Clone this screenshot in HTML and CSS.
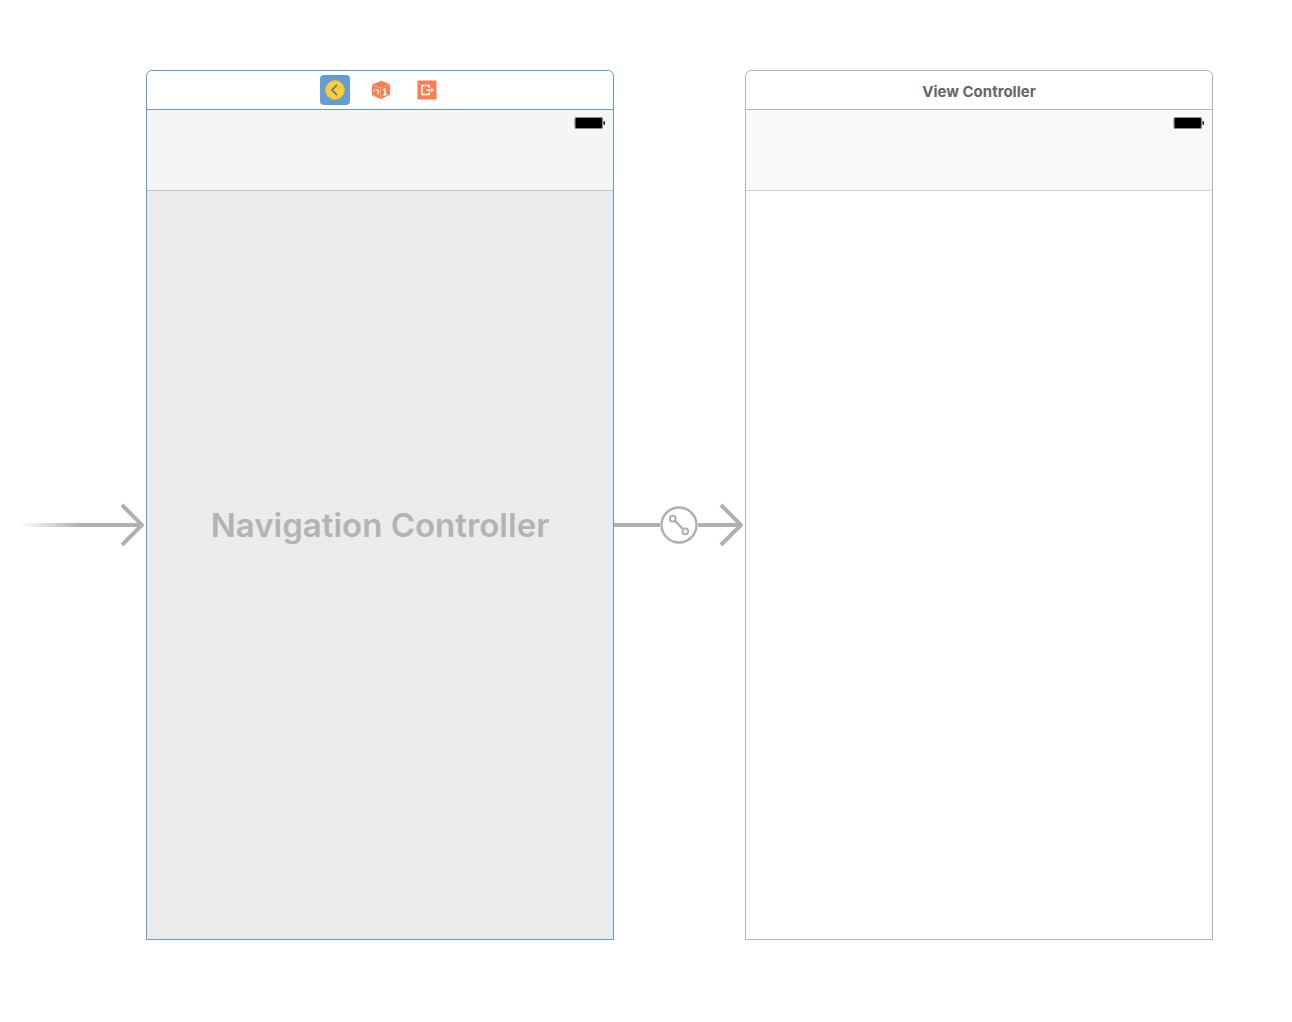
FILE: index.html
```html
<!DOCTYPE html>
<html lang="en">
<head>
<meta charset="utf-8">
<meta name="viewport" content="width=device-width, initial-scale=1">
<title>Storyboard</title>
<link rel="stylesheet" href="styles.css">
</head>
<body>
<main class="storyboard">
  <div class="link link-entry">
    <svg class="entry-arrow" viewBox="0 0 124 44" aria-hidden="true">
      <defs>
        <linearGradient id="fade" x1="0" x2="60" y1="0" y2="0" gradientUnits="userSpaceOnUse">
          <stop offset="0" stop-color="#b0b0b0" stop-opacity="0"/>
          <stop offset="1" stop-color="#b0b0b0"/>
        </linearGradient>
      </defs>
      <rect x="0" y="20" width="122" height="4" fill="url(#fade)"/>
      <path d="M102 2L122 22L102 42" fill="none" stroke="#b0b0b0" stroke-width="4"/>
    </svg>
  </div>

  <section class="scene scene-selected">
    <header class="dock">
      <button class="dock-item dock-item-active" type="button" aria-label="Navigation Controller">
        <svg width="22" height="22" viewBox="0 0 22 22" aria-hidden="true">
          <circle cx="11" cy="11" r="9.5" fill="#ffce35" stroke="#d8b64c"/>
          <path d="M13 5.8L8 11L13 16.2" fill="none" stroke="#4e829d" stroke-width="1.8"/>
        </svg>
      </button>
      <button class="dock-item" type="button" aria-label="First Responder">
        <svg width="20" height="20" viewBox="0 0 20 20" aria-hidden="true">
          <path d="M10.5 .8L19 4.2V14.6L10 19.2L1 15.2V4.6Z" fill="#fc7d50"/>
          <path d="M1.5 5L9.5 7.8L18.5 4.8M9.5 7.8V18.6" fill="none" stroke="#ffae90" stroke-width=".8"/>
          <path d="M4.6 9.3L7.2 10.2V14.4" fill="none" stroke="#fff" stroke-width="1.3"/>
          <path d="M3 9.5V12" fill="none" stroke="#ffd5c5" stroke-width="1.1"/>
          <path d="M12 9.8L13.9 8.8V15M12 15.6L15.8 14" fill="none" stroke="#fff" stroke-width="1.4"/>
        </svg>
      </button>
      <button class="dock-item" type="button" aria-label="Exit">
        <svg width="20" height="20" viewBox="0 0 20 20" aria-hidden="true">
          <rect x=".5" y=".5" width="19" height="19" fill="#fc7d50"/>
          <path d="M12.2 7.8V5.6H5V14.4H12.2V12.2M9.5 10H15" fill="none" stroke="#fff" stroke-width="1.5"/>
          <path d="M14 7.6L17.2 10L14 12.4Z" fill="#fff"/>
        </svg>
      </button>
    </header>
    <div class="nav-bar">
      <svg class="battery" viewBox="0 0 32 12" aria-hidden="true">
        <rect x="1" y=".5" width="27.5" height="11" rx="1.5" fill="#000" stroke="#8a8a8a" stroke-width="1.2"/>
        <rect x="29.4" y="4" width="1.6" height="4" rx=".8" fill="#222"/>
      </svg>
    </div>
    <div class="canvas canvas-container">
      <h1 class="placeholder">Navigation Controller</h1>
    </div>
  </section>

  <div class="link link-segue">
    <span class="line"></span>
    <svg class="segue-badge" viewBox="0 0 38 38" role="img" aria-label="Root view controller relationship">
      <g fill="none" stroke="#b0b0b0">
        <circle cx="19" cy="19" r="17.5" stroke-width="2.4"/>
        <circle cx="12.7" cy="12.7" r="2.9" stroke-width="2"/>
        <circle cx="25.3" cy="25.3" r="2.9" stroke-width="2"/>
        <path d="M14.8 14.8L23.2 23.2" stroke-width="2.4"/>
      </g>
    </svg>
    <span class="line"></span>
    <svg class="arrow-head" viewBox="0 0 24 44" aria-hidden="true">
      <path d="M0 22H22M2 2L22 22L2 42" fill="none" stroke="#b0b0b0" stroke-width="4"/>
    </svg>
  </div>

  <section class="scene">
    <header class="dock">
      <h2 class="scene-title">View Controller</h2>
    </header>
    <div class="nav-bar">
      <svg class="battery" viewBox="0 0 32 12" aria-hidden="true">
        <rect x="1" y=".5" width="27.5" height="11" rx="1.5" fill="#000" stroke="#8a8a8a" stroke-width="1.2"/>
        <rect x="29.4" y="4" width="1.6" height="4" rx=".8" fill="#222"/>
      </svg>
    </div>
    <div class="canvas"></div>
  </section>
</main>
</body>
</html>
```
FILE: styles.css
```css
* {
  box-sizing: border-box;
}

body {
  margin: 0;
  background: #fff;
  font-family: Inter, "Liberation Sans", sans-serif;
}

.storyboard {
  display: grid;
  grid-template-columns: 146fr 468fr 131fr 468fr 79fr;
  min-height: 100vh;
  padding: 70px 0 82px;
}

.scene {
  --outline: #b4b4b4;
  display: flex;
  flex-direction: column;
  overflow: hidden;
  border: 1px solid var(--outline);
  border-radius: 6px 6px 0 0;
}

.scene-selected {
  --outline: #5b9bd9;
}

.dock {
  display: flex;
  align-items: center;
  justify-content: center;
  gap: 16px;
  height: 39px;
  border-bottom: 1px solid var(--outline);
}

.scene-selected .dock {
  padding-left: 2px;
}

.dock-item {
  display: flex;
  align-items: center;
  justify-content: center;
  width: 30px;
  height: 30px;
  padding: 0;
  border: 0;
  border-radius: 4px;
  background: none;
}

.dock-item-active {
  background: #609dd9;
}

.scene-title {
  margin: 4px 0 0;
  color: #666;
  font-size: 15px;
  font-weight: 700;
  line-height: 20px;
}

.nav-bar {
  display: flex;
  justify-content: flex-end;
  height: 81px;
  padding: 7px 7px 0 0;
  border-bottom: 1px solid #d0d0d0;
  background: #f9f9f9;
}

.scene-selected .nav-bar {
  border-bottom-color: #c4c4c4;
  background: #f5f5f5;
}

.battery {
  width: 32px;
  height: 12px;
}

.canvas {
  display: flex;
  flex: 1;
  justify-content: center;
}

.canvas-container {
  align-items: center;
  padding-bottom: 80px;
  background: #ebebeb;
}

.placeholder {
  margin: 0;
  color: #b3b3b3;
  font-size: 33px;
  font-weight: 600;
  line-height: 40px;
}

/* Arrows are centred on the screen area, below the dock. */
.link {
  display: flex;
  align-items: center;
  padding: 39px 2px 0 0;
}

.link-entry {
  justify-content: flex-end;
}

.entry-arrow {
  width: 124px;
  height: 44px;
}

.line {
  flex: 1;
  height: 4px;
  background: #b0b0b0;
}

.line:first-child {
  flex: 0 1 46px;
}

.segue-badge {
  width: 38px;
  height: 38px;
}

.arrow-head {
  width: 24px;
  height: 44px;
}
```
